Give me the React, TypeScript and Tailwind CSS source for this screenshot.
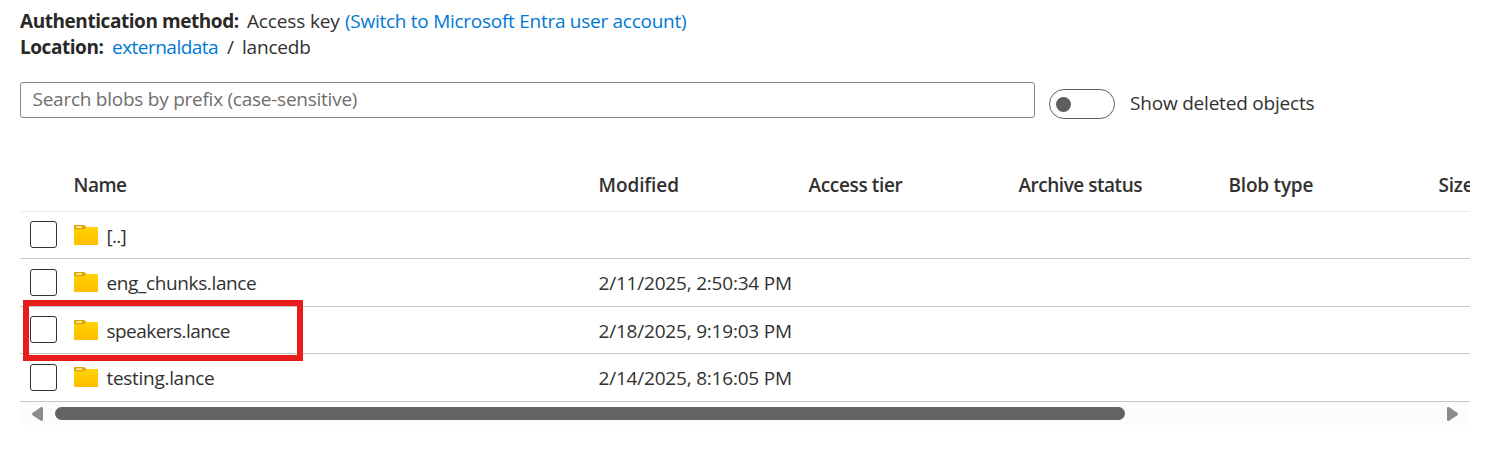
type Blob = { name: string; modified: string; row: string; check: string; label: string };

const blobs: Blob[] = [
  { name: "[..]", modified: "", row: "h-[47px]", check: "mt-[9px]", label: "tracking-[-0.7px]" },
  { name: "eng_chunks.lance", modified: "2/11/2025, 2:50:34 PM", row: "h-12", check: "mt-[10px]", label: "tracking-[-0.37px]" },
  { name: "speakers.lance", modified: "2/18/2025, 9:19:03 PM", row: "h-[47px]", check: "mt-[9px]", label: "tracking-[-0.55px]" },
  { name: "testing.lance", modified: "2/14/2025, 8:16:05 PM", row: "h-12", check: "mt-[10px]", label: "tracking-[-0.3px]" },
];

function Folder() {
  return (
    <svg width="24" height="20" viewBox="0 0 24 20" className="mt-[13px] shrink-0">
      <defs>
        <linearGradient id="folder" x1="0" y1="0" x2="0" y2="1">
          <stop offset="0" stopColor="#ffd400" />
          <stop offset="1" stopColor="#ffbd00" />
        </linearGradient>
      </defs>
      <path d="M0 2H23.5Q24 2 24 2.5V19.5Q24 20 23.5 20H.5Q0 20 0 19.5Z" fill="url(#folder)" />
      <path d="M0 .5Q0 0 .5 0H9.5Q10.2 0 10.8.6L12.3 2L10.9 3.6Q10.3 4.2 9.4 4.2H0Z" fill="#dfa500" />
      <rect x="2" y="1.2" width="6.2" height="1.7" rx=".6" fill="#ffeab0" />
    </svg>
  );
}

function BlobRow({ blob }: { blob: Blob }) {
  return (
    <div className={`flex border-b border-[#c8c8c8] pl-[10px] ${blob.row}`}>
      <div className={`mr-[17px] size-[27px] shrink-0 rounded-[3px] border border-[#323130] ${blob.check}`} />
      <Folder />
      <div className={`ml-[8.5px] w-[492px] shrink-0 pt-[11px] leading-[26px] ${blob.label}`}>{blob.name}</div>
      <div className="pt-[11px] leading-[26px] tracking-[-0.2px]">{blob.modified}</div>
    </div>
  );
}

export default function App() {
  return (
    <div className="h-[463px] w-[1488px] overflow-hidden bg-white pl-5 font-['Open_Sans','Noto_Sans',sans-serif] text-[19px] whitespace-nowrap text-[#323130]">
      <div className="flex h-[34px] pt-2 leading-[26px]">
        <b className="w-[227px] font-bold tracking-[-0.44px] text-[#292827]">Authentication method:</b>
        <span className="w-[98px] tracking-[-0.15px]">Access key</span>
        <a className="tracking-[-0.27px] text-[#0078d4]">(Switch to Microsoft Entra user account)</a>
      </div>
      <div className="flex h-[26px] leading-[26px]">
        <b className="w-[92px] font-bold tracking-[-0.45px] text-[#292827]">Location:</b>
        <a className="w-[115px] tracking-[-0.52px] text-[#0078d4]">externaldata</a>
        <span className="w-[15px]">/</span>
        <span className="tracking-[-0.2px]">lancedb</span>
      </div>

      <div className="mt-[22px] flex h-[37px]">
        <div className="h-9 w-[1015px] rounded-[3px] border border-[#8a8886] pt-[3px] pl-[11.5px] leading-[26px] tracking-[-0.25px] text-[#706e6c]">
          Search blobs by prefix (case-sensitive)
        </div>
        <div className="mt-[7px] ml-[14px] flex h-[30px] w-[66px] items-center rounded-full border border-[#605e5c] pl-[6px]">
          <div className="size-[15px] rounded-full bg-[#605e5c]" />
        </div>
        <div className="ml-[15px] pt-[8px] leading-[26px] tracking-[-0.2px]">Show deleted objects</div>
      </div>

      <div className="relative mt-[41px] w-[1450px]">
        <div className="flex h-[52px] overflow-hidden border-b border-[#ebebeb] pt-[12px] pl-[53.5px] leading-[26px] font-semibold">
          <div className="w-[525px] shrink-0 tracking-[-0.5px]">Name</div>
          <div className="w-[210px] shrink-0 tracking-[-0.1px]">Modified</div>
          <div className="w-[210px] shrink-0 tracking-[-0.35px]">Access tier</div>
          <div className="w-[210px] shrink-0 tracking-[-0.48px]">Archive status</div>
          <div className="w-[210px] shrink-0 tracking-[-0.22px]">Blob type</div>
          <div className="w-[210px] shrink-0 tracking-[-0.2px]">Size</div>
        </div>
        {blobs.map((blob) => (
          <BlobRow key={blob.name} blob={blob} />
        ))}
        <div className="flex h-[23px] items-center bg-[#fcfcfc] pr-3 pl-3">
          <svg width="11" height="14" viewBox="0 0 11 14">
            <path d="M11 1V13Q11 14 9.8 14L8.8 13.7L.7 8.2Q-.5 7 .7 5.8L8.8.3L9.8 0Q11 0 11 1Z" fill="#8b8b8b" />
          </svg>
          <div className="ml-3 h-[13px] w-[1070px] rounded-full bg-[#636363]" />
          <svg width="11" height="14" viewBox="0 0 11 14" className="ml-auto">
            <path d="M0 1V13Q0 14 1.2 14L2.2 13.7L10.3 8.2Q11.5 7 10.3 5.8L2.2.3L1.2 0Q0 0 0 1Z" fill="#8b8b8b" />
          </svg>
        </div>
        <div className="absolute top-[140px] left-[3px] h-[61px] w-[280px] border-[6px] border-[#e81b1b]" />
      </div>
    </div>
  );
}
